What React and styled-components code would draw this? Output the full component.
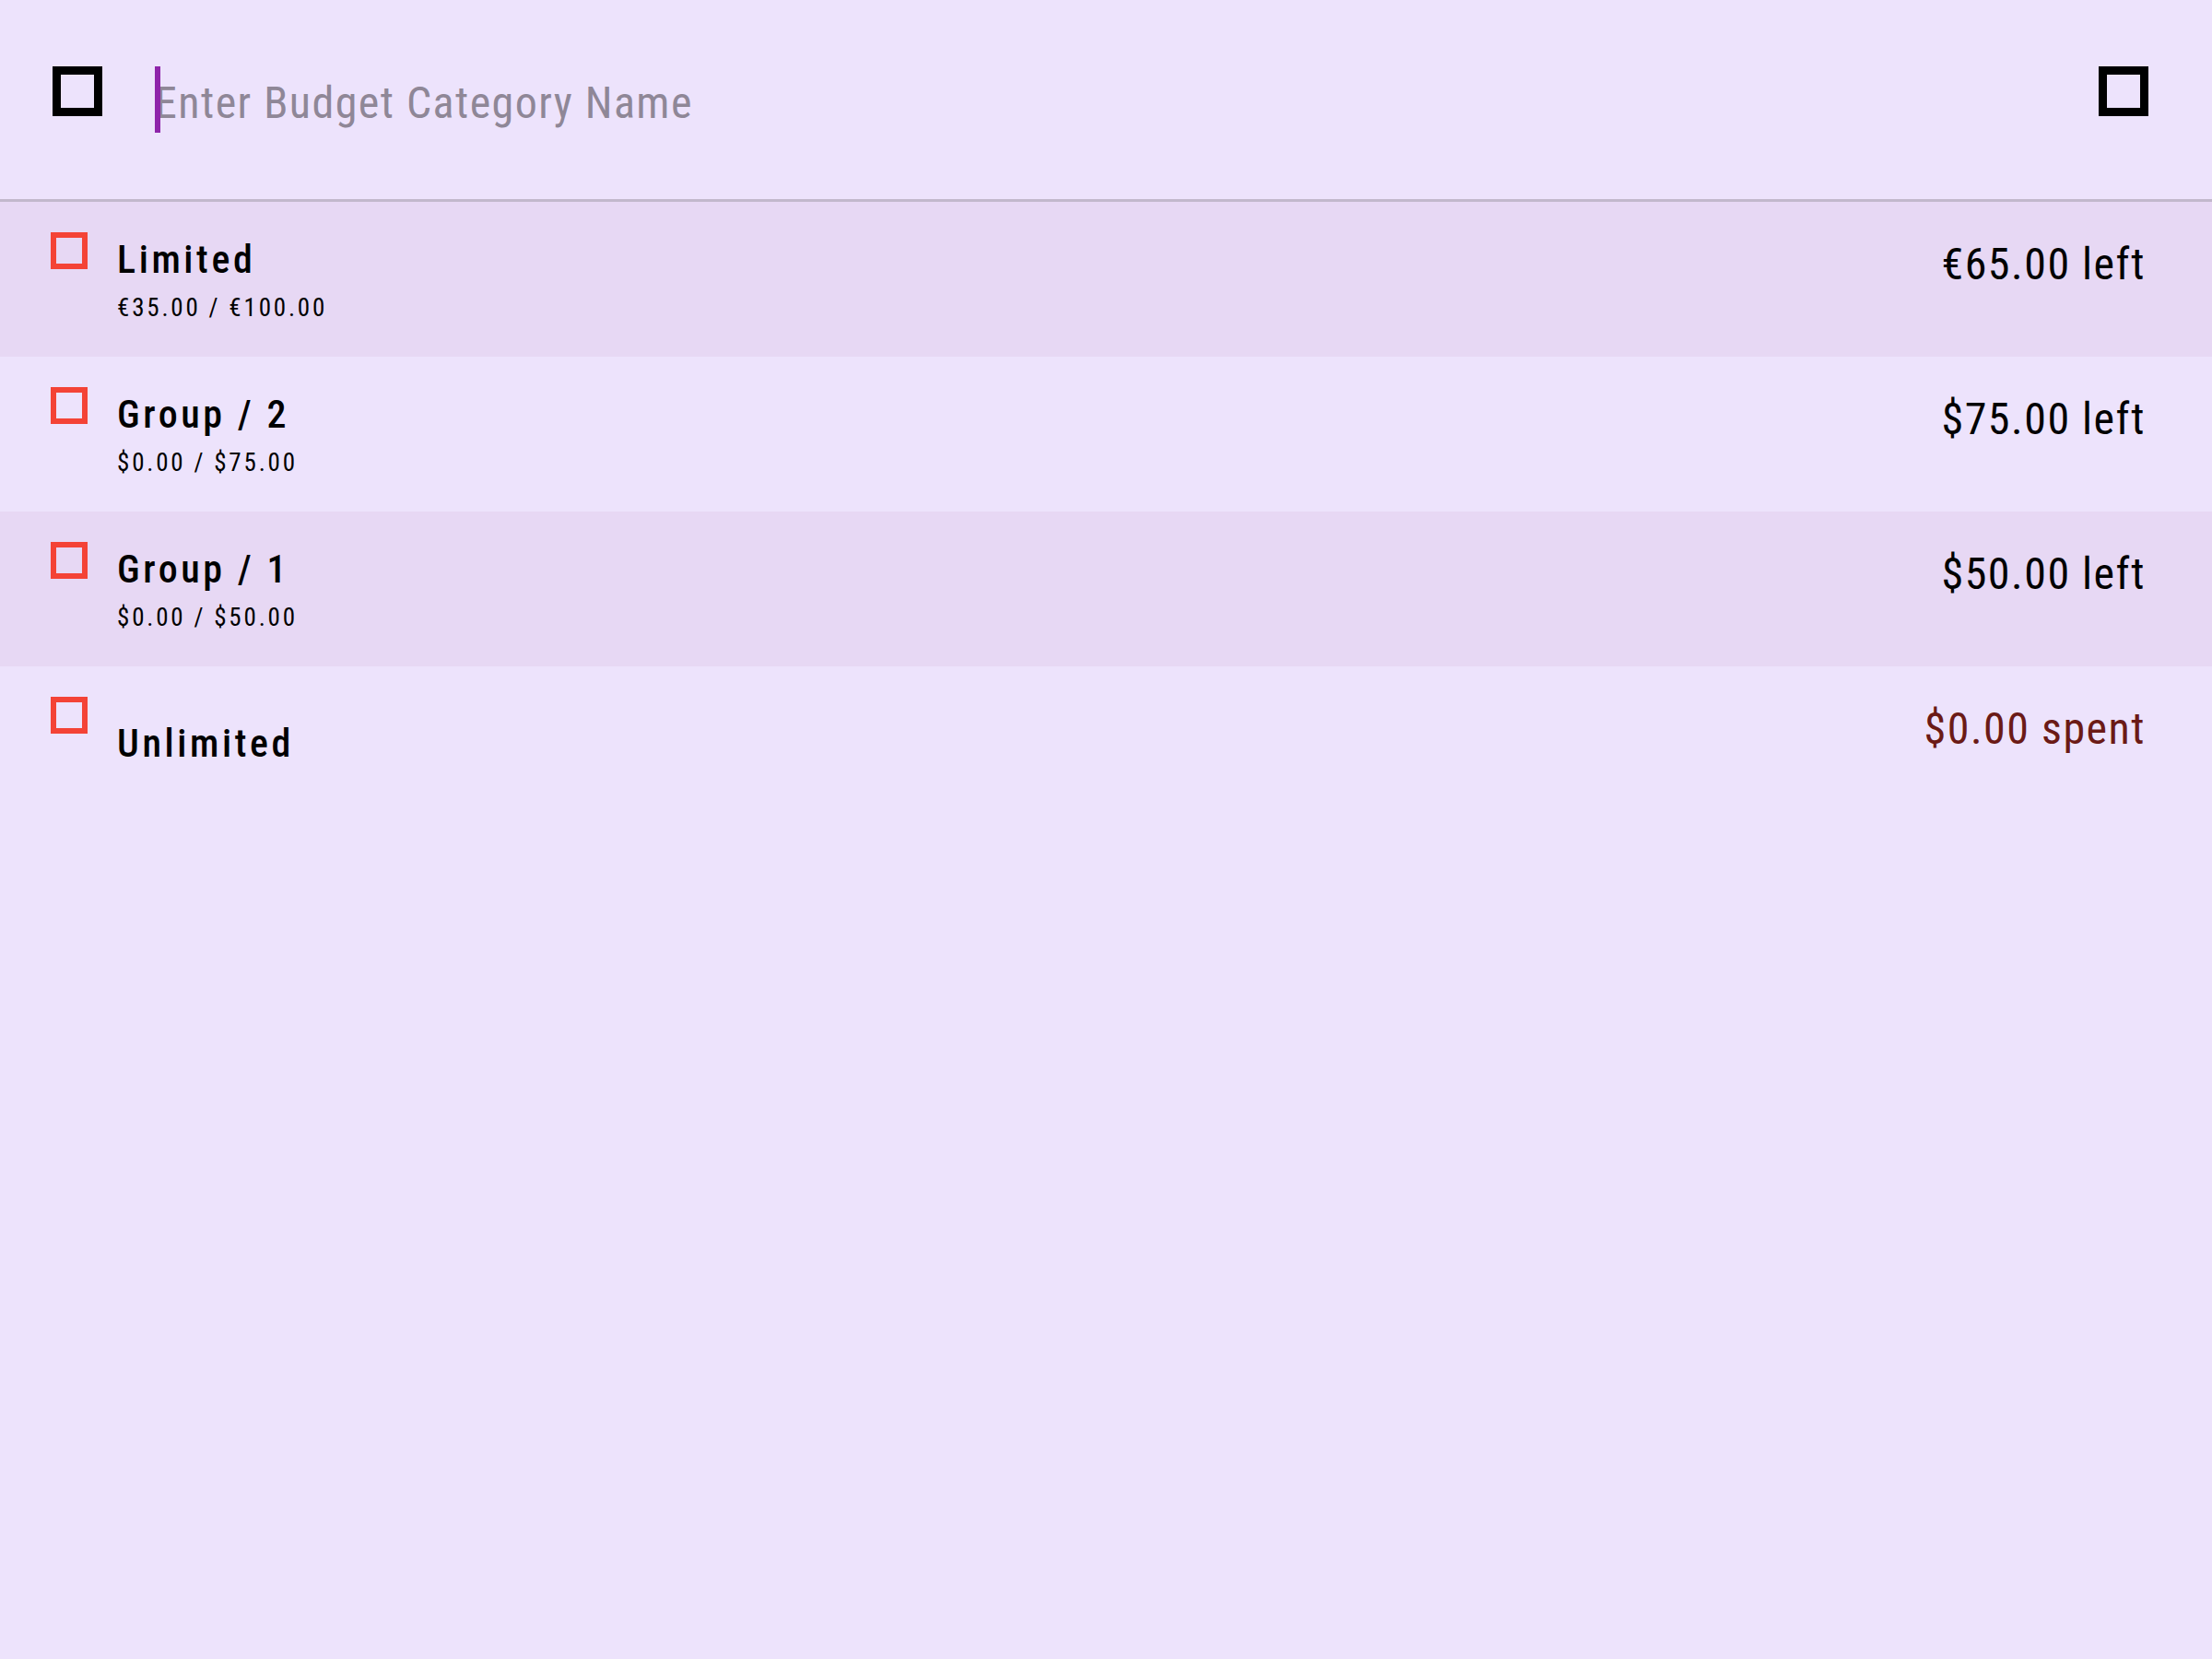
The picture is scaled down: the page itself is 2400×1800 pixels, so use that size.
import React from "react";
import styled, { createGlobalStyle } from "styled-components";

const GlobalStyle = createGlobalStyle`
  html, body {
    margin: 0;
    padding: 0;
    background: #ede3fc;
  }
  body {
    font-family: Roboto, "Noto Sans", sans-serif;
    font-stretch: 80%;
  }
`;

const categories = [
  { name: "Limited", detail: "€35.00 / €100.00", amount: "€65.00 left" },
  { name: "Group / 2", detail: "$0.00 / $75.00", amount: "$75.00 left" },
  { name: "Group / 1", detail: "$0.00 / $50.00", amount: "$50.00 left" },
  { name: "Unlimited", amount: "$0.00 spent", spent: true },
];

export default function App() {
  return (
    <>
      <GlobalStyle />
      <SPage>
        {/* search / add bar */}
        <SHeader>
          <SIconBox />
          <SField>
            <SCursor />
            <SPlaceholder>Enter Budget Category Name</SPlaceholder>
          </SField>
          <SIconBox />
        </SHeader>
        {/* category list */}
        <SList>
          {categories.map((c, i) => (
            <SRow key={c.name} $shaded={i % 2 === 0}>
              <SCheck />
              <SText>
                <STitle>{c.name}</STitle>
                {c.detail && <SDetail>{c.detail}</SDetail>}
              </SText>
              <SAmount $spent={c.spent}>{c.amount}</SAmount>
            </SRow>
          ))}
        </SList>
      </SPage>
    </>
  );
}

//styled components
const SPage = styled.div`
  min-height: 1800px;
  background: #ede3fc;
`;

const SHeader = styled.div`
  display: flex;
  align-items: flex-start;
  height: 219px;
  box-sizing: border-box;
  padding: 72px 69px 0 57px;
  border-bottom: 3px solid #c2b8cc;
`;

const SIconBox = styled.div`
  width: 54px;
  height: 54px;
  box-sizing: border-box;
  border: 9px solid #000;
  flex-shrink: 0;
`;

const SField = styled.div`
  flex: 1;
  display: flex;
  align-items: flex-start;
  margin-left: 57px;
`;

const SCursor = styled.div`
  width: 6px;
  height: 72px;
  margin-right: -6px;
  background: #8e24aa;
  position: relative;
  z-index: 1;
`;

const SPlaceholder = styled.span`
  font-size: 48px;
  line-height: 72px;
  margin-top: 4px;
  color: #8f8797;
  letter-spacing: 1.45px;
`;

const SList = styled.div`
  display: flex;
  flex-direction: column;
`;

const SRow = styled.div`
  display: flex;
  align-items: flex-start;
  height: 168px;
  box-sizing: border-box;
  padding: 0 72px 0 55px;
  background: ${(p) => (p.$shaded ? "#e7d8f4" : "transparent")};
`;

const SCheck = styled.div`
  width: 40px;
  height: 40px;
  box-sizing: border-box;
  margin-top: 33px;
  border: 6px solid #f44336;
  flex-shrink: 0;
`;

const SText = styled.div`
  flex: 1;
  height: 100%;
  display: flex;
  flex-direction: column;
  justify-content: center;
  margin-left: 32px;
`;

const STitle = styled.div`
  font-size: 42px;
  line-height: 62px;
  font-weight: 500;
  color: #000;
  letter-spacing: 3.6px;
`;

const SDetail = styled.div`
  font-size: 27px;
  line-height: 42px;
  color: #000;
  letter-spacing: 2.8px;
`;

const SAmount = styled.div`
  margin-top: 40px;
  font-size: 48px;
  line-height: 56px;
  color: ${(p) => (p.$spent ? "#6b1a16" : "#000")};
  letter-spacing: 1.5px;
`;
